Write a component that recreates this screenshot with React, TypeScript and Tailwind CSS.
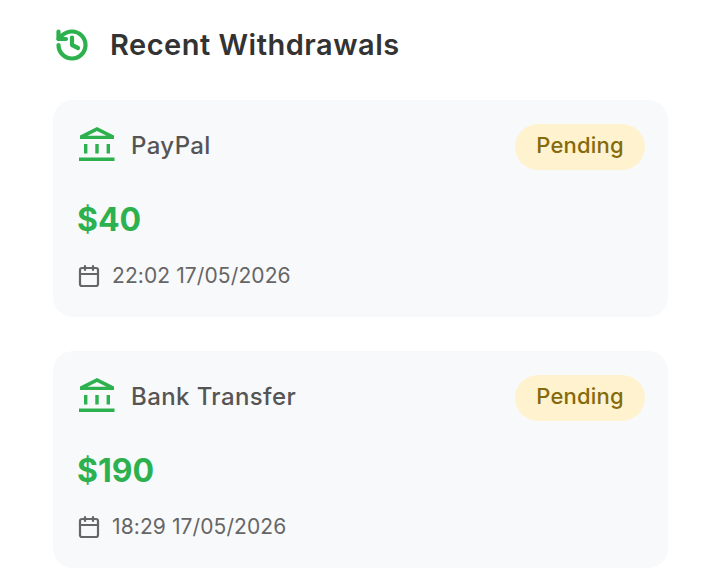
import { Calendar, History } from "lucide-react";

const withdrawals = [
  { method: "PayPal", amount: "$40", date: "22:02 17/05/2026" },
  { method: "Bank Transfer", amount: "$190", date: "18:29 17/05/2026" },
];

function BankIcon() {
  return (
    <svg viewBox="0 0 36 35" className="-mt-[5px] h-[35px] w-9 text-[#2db14f]" fill="currentColor">
      <path fillRule="evenodd" d="M18 0 35 8.5V12H1V8.5ZM18 4 8.5 8.8H27.5Z" />
      <rect x="5" y="17" width="3.4" height="9.5" />
      <rect x="16.3" y="17" width="3.4" height="9.5" />
      <rect x="27.6" y="17" width="3.4" height="9.5" />
      <rect x="0" y="30.5" width="35.5" height="3.5" />
    </svg>
  );
}

function WithdrawalCard({ method, amount, date }: { method: string; amount: string; date: string }) {
  return (
    <div className="h-[217px] rounded-[20px] bg-[#f8f9fb] pt-6 pl-6 pr-[23px]">
      <div className="flex items-center justify-between">
        <div className="flex items-center gap-4 pl-0.5">
          <BankIcon />
          <span className="-mt-[2px] text-2xl font-medium text-[#555] tracking-[0.4px]">{method}</span>
        </div>
        <span className="flex h-[46px] w-[130px] items-center justify-center rounded-full bg-[#fff2cf] pb-[3px] text-[22px] font-medium tracking-[0.2px] text-[#856a0c]">
          Pending
        </span>
      </div>
      <div className="mt-[27px] text-[32px] leading-[46px] font-bold text-[#2db14f]">{amount}</div>
      <div className="mt-[17px] flex items-center gap-[11px] text-[#666]">
        <Calendar className="h-6 w-6" strokeWidth={2.2} />
        <span className="text-[21px] tracking-[0.1px]">{date}</span>
      </div>
    </div>
  );
}

export default function App() {
  return (
    <div className="h-[587px] w-[720px] overflow-hidden bg-white pl-[53px] pr-[52px] font-['Inter',sans-serif]">
      <div className="flex h-[100px] items-start gap-5 pt-[24px]">
        <History className="mt-[3px] ml-[1px] h-9 w-9 text-[#2db14f]" strokeWidth={2.8} />
        <h2 className="text-[29px] leading-[42px] font-semibold tracking-[0.5px] text-[#333]">Recent Withdrawals</h2>
      </div>
      <div className="flex flex-col gap-[34px]">
        {withdrawals.map((w) => (
          <WithdrawalCard key={w.method} {...w} />
        ))}
      </div>
    </div>
  );
}
